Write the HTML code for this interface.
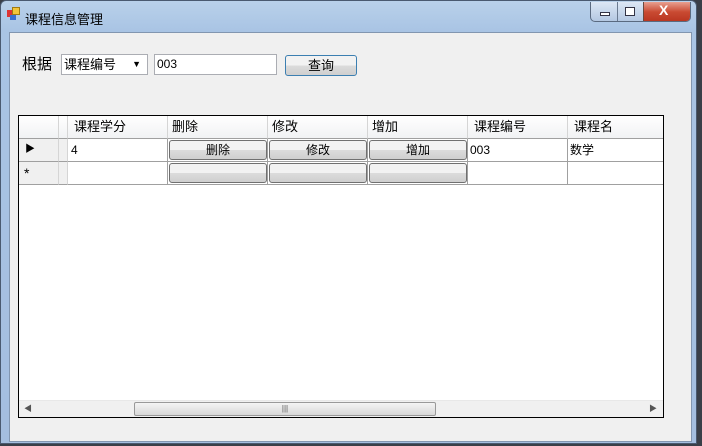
<!DOCTYPE html><html><head><style>
*{margin:0;padding:0;box-sizing:border-box}
body{width:702px;height:446px;overflow:hidden;background:#3a3f48;font-family:"Liberation Sans","Noto Sans CJK SC",sans-serif;position:relative}
.win{position:absolute;left:0;top:0;width:697px;height:444px;background:linear-gradient(#b9d1ea,#a9c4e4 30px,#a4bedf);border-radius:6px 6px 0 0;border:1px solid #4a5a70}
.title{position:absolute;left:24px;top:8px;font-size:13px;color:#000}
.client{position:absolute;left:8px;top:31px;width:683px;height:410px;background:#f0f0f0;border:1px solid #8296b0}
.abs{position:absolute}
.cell{position:absolute;font-size:12px;line-height:22px;padding-left:6px;border-right:1px solid #a0a0a0;border-bottom:1px solid #a0a0a0;background:#fff;white-space:nowrap;overflow:hidden}
.hd{background:linear-gradient(#fff,#f1f2f4);border-right:1px solid #d5d5d5;border-bottom:1px solid #a0a0a0;font-size:13px}
.btn{position:absolute;border:1px solid #707070;border-radius:3px;background:linear-gradient(#f2f2f2 50%,#dcdcdc 50%,#cfcfcf);font-size:12px;text-align:center;line-height:18px}
</style></head><body>
<div class="win">
 <div class="abs" style="left:6px;top:9px;width:7px;height:7px;background:#d33"></div>
 <div class="abs" style="left:11px;top:6px;width:8px;height:8px;background:#f3c53b;border:1px solid #a07a10"></div>
 <div class="abs" style="left:9px;top:14px;width:6px;height:5px;background:#3a6fd0"></div>
 <div class="title">课程信息管理</div>
 <div class="abs" style="left:589px;top:1px;width:101px;height:20px;border:1px solid #5a6a80;border-top:none;border-radius:0 0 5px 5px;background:linear-gradient(#dce7f5,#b4c8e2);overflow:hidden">
  <div class="abs" style="left:26px;top:0;width:1px;height:20px;background:#6a7a90"></div>
  <div class="abs" style="left:52px;top:0;width:48px;height:20px;background:linear-gradient(#e8a090,#c94a32 50%,#b83520);border-left:1px solid #6a4a40"></div>
  <div class="abs" style="left:9px;top:10px;width:10px;height:4px;border:1px solid #334;background:#fff"></div>
  <div class="abs" style="left:34px;top:5px;width:10px;height:9px;border:1px solid #334;background:#fff"></div>
  <div class="abs" style="left:68px;top:0;color:#fff;font-weight:bold;font-size:14px">X</div>
 </div>
 <div class="client">
  <div class="abs" style="left:12px;top:20px;font-size:15px">根据</div>
  <div class="abs" style="left:51px;top:21px;width:87px;height:21px;background:#fff;border:1px solid #abadb3;font-size:13px;line-height:19px;padding-left:2px">课程编号<span style="position:absolute;right:6px;top:0;font-size:9px">▼</span></div>
  <div class="abs" style="left:144px;top:21px;width:123px;height:21px;background:#fff;border:1px solid #abadb3;font-size:12px;line-height:19px;padding-left:2px">003</div>
  <div class="btn" style="left:275px;top:22px;width:72px;height:21px;border-color:#3c7fb1;line-height:19px;font-size:13px">查询</div>
  <div class="abs" style="left:8px;top:82px;width:646px;height:303px;background:#fff;border:1px solid #000;overflow:hidden">
   <div class="cell hd" style="left:0;top:0;width:40px;height:23px"></div>
   <div class="cell hd" style="left:40px;top:0;width:9px;height:23px"></div>
   <div class="cell hd" style="left:49px;top:0;width:100px;height:23px">课程学分</div>
   <div class="cell hd" style="left:149px;top:0;width:100px;height:23px;padding-left:4px">删除</div>
   <div class="cell hd" style="left:249px;top:0;width:100px;height:23px;padding-left:4px">修改</div>
   <div class="cell hd" style="left:349px;top:0;width:100px;height:23px;padding-left:4px">增加</div>
   <div class="cell hd" style="left:449px;top:0;width:100px;height:23px">课程编号</div>
   <div class="cell hd" style="left:549px;top:0;width:100px;height:23px">课程名</div>
   <div class="cell hd" style="left:0;top:23px;width:40px;height:23px;background:#f0f0f0;font-size:10px">▶</div>
   <div class="cell hd" style="left:40px;top:23px;width:9px;height:23px;background:#f0f0f0"></div>
   <div class="cell" style="left:49px;top:23px;width:100px;height:23px;padding-left:3px">4</div>
   <div class="cell" style="left:149px;top:23px;width:100px;height:23px"></div>
   <div class="cell" style="left:249px;top:23px;width:100px;height:23px"></div>
   <div class="cell" style="left:349px;top:23px;width:100px;height:23px"></div>
   <div class="cell" style="left:449px;top:23px;width:100px;height:23px;padding-left:2px">003</div>
   <div class="cell" style="left:549px;top:23px;width:100px;height:23px;padding-left:2px">数学</div>
   <div class="cell hd" style="left:0;top:46px;width:40px;height:23px;background:#f0f0f0;font-size:14px;padding-left:5px">*</div>
   <div class="cell hd" style="left:40px;top:46px;width:9px;height:23px;background:#f0f0f0"></div>
   <div class="cell" style="left:49px;top:46px;width:100px;height:23px"></div>
   <div class="cell" style="left:149px;top:46px;width:100px;height:23px"></div>
   <div class="cell" style="left:249px;top:46px;width:100px;height:23px"></div>
   <div class="cell" style="left:349px;top:46px;width:100px;height:23px"></div>
   <div class="cell" style="left:449px;top:46px;width:100px;height:23px"></div>
   <div class="cell" style="left:549px;top:46px;width:100px;height:23px"></div>
   <div class="btn" style="left:150px;top:24px;width:98px;height:20px">删除</div>
   <div class="btn" style="left:250px;top:24px;width:98px;height:20px">修改</div>
   <div class="btn" style="left:350px;top:24px;width:98px;height:20px">增加</div>
   <div class="btn" style="left:150px;top:47px;width:98px;height:20px"></div>
   <div class="btn" style="left:250px;top:47px;width:98px;height:20px"></div>
   <div class="btn" style="left:350px;top:47px;width:98px;height:20px"></div>
   <div class="abs" style="left:0;top:284px;width:646px;height:17px;background:#f0f0f0;border-top:1px solid #e8e8e8">
    <div class="abs" style="left:5px;top:2px;font-size:8px;color:#555">◀</div>
    <div class="abs" style="left:630px;top:2px;font-size:8px;color:#555">▶</div>
    <div class="abs" style="left:115px;top:1px;width:302px;height:14px;border:1px solid #999;border-radius:2px;background:linear-gradient(#f4f4f4,#d8d8d8);font-size:8px;text-align:center;line-height:12px;color:#555">|||</div>
   </div>
  </div>
 </div>
</div>
</body></html>
